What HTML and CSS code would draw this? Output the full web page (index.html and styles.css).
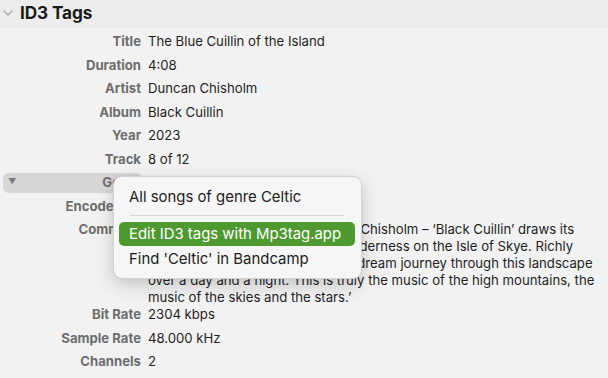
FILE: index.html
```html
<!DOCTYPE html>
<html lang="en">
<head>
<meta charset="utf-8">
<title>ID3 Tags</title>
<link rel="stylesheet" href="styles.css">
</head>
<body>
<div class="panel">
  <header class="section-header">
    <svg class="chevron" width="10" height="6" viewBox="0 0 10 6"><path d="M1 1 L5 5 L9 1" fill="none" stroke="#a3a3a3" stroke-width="1.3" stroke-linecap="round" stroke-linejoin="round"/></svg>
    <h1 class="section-title">ID3 Tags</h1>
  </header>
  <div class="tags">
    <div class="row"><div class="label">Title</div><div class="value">The Blue Cuillin of the Island</div></div>
    <div class="row"><div class="label">Duration</div><div class="value">4:08</div></div>
    <div class="row"><div class="label">Artist</div><div class="value">Duncan Chisholm</div></div>
    <div class="row"><div class="label">Album</div><div class="value">Black Cuillin</div></div>
    <div class="row"><div class="label">Year</div><div class="value">2023</div></div>
    <div class="row"><div class="label">Track</div><div class="value">8 of 12</div></div>
    <div class="row"><div class="label selected"><span class="disclosure">&#9660;</span><span>Genre</span></div><div class="value">Celtic</div></div>
    <div class="row"><div class="label">Encoded by</div><div class="value">Lavf60.3.100</div></div>
    <div class="row row-multi"><div class="label">Comment</div>
      <div class="value">
        <span class="line">‘The brand new album by Duncan Chisholm – ‘Black Cuillin’ draws its</span>
        <span class="line">inspiration from the untouched wilderness on the Isle of Skye. Richly</span>
        <span class="line">evocative, it's a haunting musical dream journey through this landscape</span>
        <span class="line">over a day and a night. This is truly the music of the high mountains, the</span>
        <span class="line">music of the skies and the stars.’</span>
      </div>
    </div>
    <div class="row"><div class="label">Bit Rate</div><div class="value">2304 kbps</div></div>
    <div class="row"><div class="label">Sample Rate</div><div class="value">48.000 kHz</div></div>
    <div class="row"><div class="label">Channels</div><div class="value">2</div></div>
  </div>
  <div class="menu">
    <div class="menu-item">All songs of genre Celtic</div>
    <div class="menu-sep"></div>
    <div class="menu-item active">Edit ID3 tags with Mp3tag.app</div>
    <div class="menu-item">Find 'Celtic' in Bandcamp</div>
  </div>
</div>
</body>
</html>
```
FILE: styles.css
```css
html, body {
  margin: 0;
  padding: 0;
  background: #f2f2f2;
}
body {
  font-family: Inter, "Noto Sans", "Liberation Sans", sans-serif;
  color: #1e1e1e;
  width: 608px;
  height: 378px;
  overflow: hidden;
}
.panel {
  position: relative;
  width: 608px;
  height: 378px;
}
.section-header {
  height: 28px;
  background: #ececec;
  display: flex;
  align-items: center;
  gap: 7px;
  padding-left: 3px;
  box-sizing: border-box;
}
.chevron {
  margin-top: -2px;
}
.section-title {
  margin: 0;
  font-size: 17.2px;
  font-weight: 700;
  color: #1a1a1a;
  letter-spacing: -0.1px;
  margin-top: -4px;
}
.tags {
  display: flex;
  flex-direction: column;
  gap: 6.5px;
  padding-top: 5px;
}
.row {
  display: grid;
  grid-template-columns: 141px 1fr;
  column-gap: 7px;
  font-size: 13.15px;
  line-height: 17px;
}
.row-multi {
  margin-bottom: -6.5px;
}
.label {
  text-align: right;
  font-weight: 700;
  color: #6e6e6e;
  white-space: nowrap;
}
.label.selected {
  display: flex;
  justify-content: space-between;
  align-items: center;
  background: #d7d7d7;
  border-radius: 6px;
  margin: -1px -1px -2px 3px;
  padding: 1px 1px 2px 5px;
}
.disclosure {
  font-size: 8px;
  color: #7a7a7a;
  line-height: 1;
  margin-top: -4px;
}
.value {
  white-space: nowrap;
}
.line {
  display: block;
}
.menu {
  position: absolute;
  left: 113px;
  top: 176px;
  width: 249px;
  height: 103px;
  box-sizing: border-box;
  padding: 8px 6px 7px 5px;
  background: #f6f6f6;
  border: 1px solid #d4d4d4;
  border-radius: 9px;
  box-shadow: 0 6px 18px rgba(0, 0, 0, 0.18), 0 0 2px rgba(0, 0, 0, 0.08);
  display: flex;
  flex-direction: column;
  font-size: 14.9px;
  color: #1c1c1c;
}
.menu-item {
  height: 24px;
  line-height: 24px;
  padding-left: 10px;
  border-radius: 5px;
  white-space: nowrap;
}
.menu-item + .menu-item {
  margin-top: 1px;
}
.menu-item.active {
  background: #4e9a30;
  color: #ffffff;
}
.menu-sep {
  height: 15px;
  margin: 0 11px 0 11px;
  position: relative;
}
.menu-sep::after {
  content: "";
  position: absolute;
  left: 0;
  right: 0;
  top: 6px;
  height: 1px;
  background: #d9d9d9;
}
```
